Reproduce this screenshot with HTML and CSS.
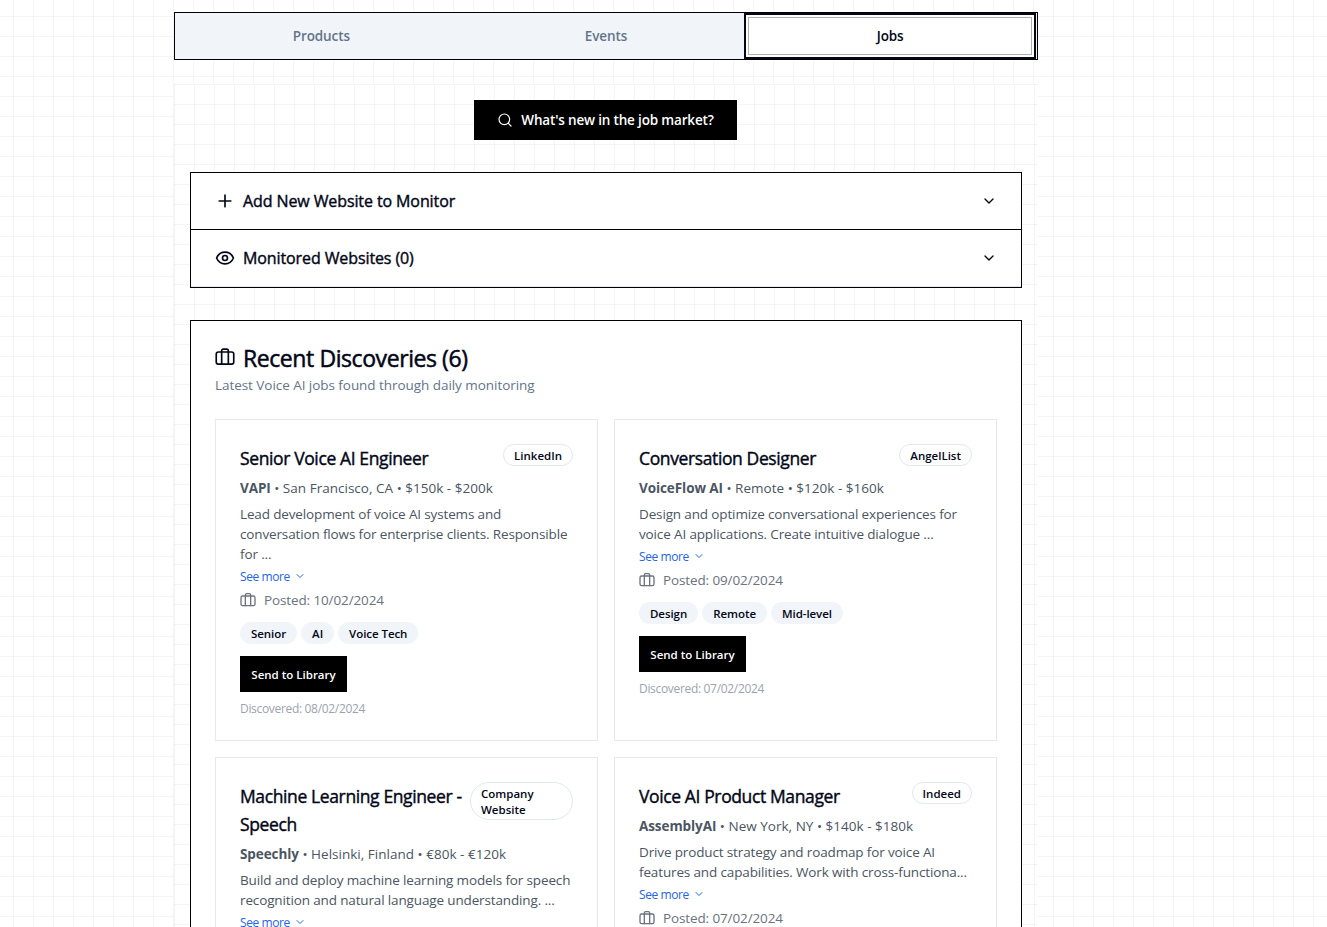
FILE: index.html
```html
<!DOCTYPE html>
<html lang="en">
<head>
<meta charset="utf-8">
<title>Jobs</title>
<link rel="stylesheet" href="styles.css">
</head>
<body>
<svg class="sprite" width="0" height="0" aria-hidden="true">
  <symbol id="search" viewBox="0 0 24 24"><circle cx="11" cy="11" r="8"/><path d="m21 21-4.3-4.3"/></symbol>
  <symbol id="plus" viewBox="0 0 24 24"><path d="M5 12h14M12 5v14"/></symbol>
  <symbol id="eye" viewBox="0 0 24 24"><path d="M2.06 12.35a1 1 0 0 1 0-.7 10.75 10.75 0 0 1 19.88 0 1 1 0 0 1 0 .7 10.75 10.75 0 0 1-19.88 0"/><circle cx="12" cy="12" r="3"/></symbol>
  <symbol id="down" viewBox="0 0 24 24"><path d="m6 9 6 6 6-6"/></symbol>
  <symbol id="case" viewBox="0 0 24 24"><rect x="1.5" y="6" width="21" height="14.5" rx="2.5"/><path d="M8 20.500V4.500a2 2 0 0 1 2-2h4a2 2 0 0 1 2 2v16"/></symbol>
</svg>
<main class="page">
  <nav class="tabs">
    <button class="tab">Products</button>
    <button class="tab">Events</button>
    <button class="tab tab-active">Jobs</button>
  </nav>
  <section class="panel">
    <button class="cta"><svg class="icon i16"><use href="#search"/></svg><span>What's new in the job market?</span></button>
    <div class="accordion">
      <div class="acc-row"><svg class="icon i20"><use href="#plus"/></svg><span class="acc-label">Add New Website to Monitor</span><svg class="icon i16 chevron"><use href="#down"/></svg></div>
      <div class="acc-row"><svg class="icon i20"><use href="#eye"/></svg><span class="acc-label">Monitored Websites (0)</span><svg class="icon i16 chevron"><use href="#down"/></svg></div>
    </div>
    <div class="discoveries">
      <h2 class="heading"><svg class="icon i20"><use href="#case"/></svg><span class="heading-text">Recent Discoveries (6)</span></h2>
      <p class="subtitle">Latest Voice AI jobs found through daily monitoring</p>
      <div class="jobs">
        <article class="job">
          <header class="job-head"><h3 class="job-title">Senior Voice AI Engineer</h3><span class="source">LinkedIn</span></header>
          <p class="meta"><b>VAPI</b> • San Francisco, CA • $150k - $200k</p>
          <p class="desc">Lead development of voice AI systems and<br>conversation flows for enterprise clients. Responsible<br>for ...</p>
          <a class="more">See more<svg class="icon i12"><use href="#down"/></svg></a>
          <p class="posted"><svg class="icon i16"><use href="#case"/></svg>Posted: 10/02/2024</p>
          <div class="tags"><span class="tag">Senior</span><span class="tag">AI</span><span class="tag">Voice Tech</span></div>
          <button class="send">Send to Library</button>
          <p class="found">Discovered: 08/02/2024</p>
        </article>
        <article class="job">
          <header class="job-head"><h3 class="job-title">Conversation Designer</h3><span class="source">AngelList</span></header>
          <p class="meta"><b>VoiceFlow AI</b> • Remote • $120k - $160k</p>
          <p class="desc">Design and optimize conversational experiences for<br>voice AI applications. Create intuitive dialogue ...</p>
          <a class="more">See more<svg class="icon i12"><use href="#down"/></svg></a>
          <p class="posted"><svg class="icon i16"><use href="#case"/></svg>Posted: 09/02/2024</p>
          <div class="tags"><span class="tag">Design</span><span class="tag">Remote</span><span class="tag">Mid-level</span></div>
          <button class="send">Send to Library</button>
          <p class="found">Discovered: 07/02/2024</p>
        </article>
        <article class="job">
          <header class="job-head"><h3 class="job-title">Machine Learning Engineer -<br>Speech</h3><span class="source source-wide">Company<br>Website</span></header>
          <p class="meta"><b>Speechly</b> • Helsinki, Finland • €80k - €120k</p>
          <p class="desc">Build and deploy machine learning models for speech<br>recognition and natural language understanding. ...</p>
          <a class="more">See more<svg class="icon i12"><use href="#down"/></svg></a>
        </article>
        <article class="job">
          <header class="job-head"><h3 class="job-title">Voice AI Product Manager</h3><span class="source">Indeed</span></header>
          <p class="meta"><b>AssemblyAI</b> • New York, NY • $140k - $180k</p>
          <p class="desc">Drive product strategy and roadmap for voice AI<br>features and capabilities. Work with cross-functiona...</p>
          <a class="more">See more<svg class="icon i12"><use href="#down"/></svg></a>
          <p class="posted"><svg class="icon i16"><use href="#case"/></svg>Posted: 07/02/2024</p>
        </article>
      </div>
    </div>
  </section>
</main>
</body>
</html>
```
FILE: styles.css
```css
* { box-sizing: border-box; margin: 0; }
html { height: 100%; overflow: hidden; }
body {
  height: 100%;
  overflow: hidden;
  color: #020617;
  font-family: "Open Sans", "Noto Sans", sans-serif;
  font-size: 14px;
  line-height: 20px;
  white-space: nowrap;
  background-color: #fff;
  background-image: linear-gradient(rgba(0,0,0,.04) 1px, transparent 1px), linear-gradient(90deg, rgba(0,0,0,.04) 1px, transparent 1px);
  background-size: 20px 20px;
  background-position: 13px 16px;
}
button { font: inherit; border: 0; border-radius: 0; white-space: nowrap; }
.sprite { display: block; height: 0; }
.icon { flex: none; fill: none; stroke: currentColor; stroke-width: 2; stroke-linecap: round; stroke-linejoin: round; -webkit-text-stroke: 0; }
.i12 { width: 12px; height: 12px; }
.i16 { width: 16px; height: 16px; }
.i20 { width: 20px; height: 20px; }
.page { width: 864px; margin-left: 174px; padding-top: 12px; }
.tabs {
  display: grid;
  grid-template-columns: repeat(3, 1fr);
  height: 48px;
  padding: 4px;
  border: 1px solid #000;
  background: #f1f5f9;
}
.tab { padding: 0; background: transparent; color: #64748b; font-size: 13.5px; font-weight: 600; letter-spacing: -.1px; }
.tab-active { margin-right: 1px; background: #fff; color: #020617; border: 1px solid #b0aeb0; box-shadow: 0 0 0 2px #fff, 0 0 0 4px #020617; }
.panel {
  display: flex;
  flex-direction: column;
  margin-top: 24px;
  height: 843px;
  padding: 16px 16px 0;
  background-color: #fff;
  background-image: linear-gradient(rgba(0,0,0,.04) 1px, transparent 1px), linear-gradient(90deg, rgba(0,0,0,.04) 1px, transparent 1px);
  background-size: 20px 20px;
}
.cta {
  display: flex;
  flex: none;
  align-items: center;
  justify-content: center;
  gap: 8px;
  align-self: center;
  width: 263px;
  height: 40px;
  margin-right: 1px;
  padding: 0;
  background: #000;
  color: #fff;
  font-size: 13.5px;
  font-weight: 600;
  letter-spacing: -.17px;
}
.cta .icon { stroke-width: 1.8; }
.accordion { flex: none; margin-top: 32px; border: 1px solid #000; background: #fff; }
.acc-row {
  display: flex;
  align-items: center;
  gap: 8px;
  height: 57px;
  padding: 0 24px;
  border-bottom: 1px solid #000;
}
.acc-row:last-child { border-color: #e2e8f0; }
.acc-label { font-size: 16px; letter-spacing: -.1px; -webkit-text-stroke: .4px; }
.chevron { margin-left: auto; }
.discoveries { flex: 1; min-height: 0; margin-top: 32px; padding: 24px 24px 0; border: 1px solid #000; border-bottom: 0; background: #fff; }
.heading {
  display: flex;
  align-items: center;
  gap: 8px;
  height: 28px;
  font-size: 23px;
  font-weight: 400;
  letter-spacing: -.42px;
}
.heading .icon { margin-bottom: 5px; }
.heading-text { padding-bottom: 2px; -webkit-text-stroke: .5px; }
.subtitle { padding-top: 2px; line-height: 20px; color: #64748b; font-size: 13.5px; letter-spacing: -.05px; }
.jobs { display: grid; grid-template-columns: repeat(2, minmax(0, 1fr)); gap: 16px; margin-top: 24px; }
.job { height: 322px; padding: 24px; border: 1px solid #e5e7eb; background: #fff; }
.job-head { display: flex; align-items: flex-start; justify-content: space-between; }
.job-title { font-size: 17.5px; font-weight: 400; line-height: 28px; letter-spacing: -.38px; -webkit-text-stroke: .4px; }
.source { padding: 3px 10px 1px; border: 1px solid #e2e8f0; border-radius: 999px; font-size: 11.5px; font-weight: 600; line-height: 16px; }
.source-wide { width: 103px; }
.meta { margin-top: 6px; color: #4b5563; font-size: 13.5px; letter-spacing: .02px; }
.meta b { font-weight: 700; letter-spacing: -.08px; }
.desc { margin-top: 6px; color: #4b5563; font-size: 13.5px; letter-spacing: -.14px; }
.more { display: flex; align-items: center; gap: 4px; height: 16px; margin-top: 4px; color: #2563eb; font-size: 12px; line-height: 16px; letter-spacing: -.4px; padding-top: 1px; }
.more .icon { margin-bottom: 1px; }
.posted { display: flex; align-items: center; gap: 8px; margin-top: 6px; color: #6b7280; font-size: 13.5px; letter-spacing: -.12px; }
.tags { display: flex; gap: 4px; margin-top: 12px; }
.tag { height: 22px; padding: 4px 11px 2px; border-radius: 999px; background: #f1f5f9; font-size: 11.5px; font-weight: 600; line-height: 16px; letter-spacing: -.06px; }
.send { display: block; width: 107px; height: 36px; margin-top: 12px; padding: 2px 0 0; background: #000; color: #fff; font-size: 11.5px; font-weight: 600; }
.found { margin-top: 9px; color: #9ca3af; font-size: 12px; line-height: 16px; letter-spacing: -.32px; }
```
